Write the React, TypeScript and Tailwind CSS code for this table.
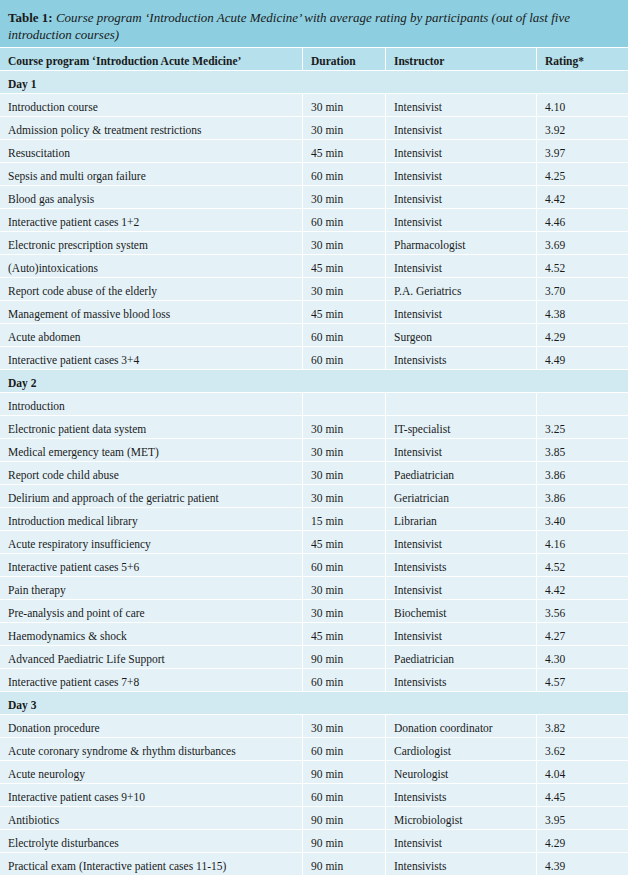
type Row = [string, string, string, string];

interface Day {
  label: string;
  rows: Row[];
}

const days: Day[] = [
  {
    label: 'Day 1',
    rows: [
      ['Introduction course', '30 min', 'Intensivist', '4.10'],
      ['Admission policy & treatment restrictions', '30 min', 'Intensivist', '3.92'],
      ['Resuscitation', '45 min', 'Intensivist', '3.97'],
      ['Sepsis and multi organ failure', '60 min', 'Intensivist', '4.25'],
      ['Blood gas analysis', '30 min', 'Intensivist', '4.42'],
      ['Interactive patient cases 1+2', '60 min', 'Intensivist', '4.46'],
      ['Electronic prescription system', '30 min', 'Pharmacologist', '3.69'],
      ['(Auto)intoxications', '45 min', 'Intensivist', '4.52'],
      ['Report code abuse of the elderly', '30 min', 'P.A. Geriatrics', '3.70'],
      ['Management of massive blood loss', '45 min', 'Intensivist', '4.38'],
      ['Acute abdomen', '60 min', 'Surgeon', '4.29'],
      ['Interactive patient cases 3+4', '60 min', 'Intensivists', '4.49'],
    ],
  },
  {
    label: 'Day 2',
    rows: [
      ['Introduction', '', '', ''],
      ['Electronic patient data system', '30 min', 'IT-specialist', '3.25'],
      ['Medical emergency team (MET)', '30 min', 'Intensivist', '3.85'],
      ['Report code child abuse', '30 min', 'Paediatrician', '3.86'],
      ['Delirium and approach of the geriatric patient', '30 min', 'Geriatrician', '3.86'],
      ['Introduction medical library', '15 min', 'Librarian', '3.40'],
      ['Acute respiratory insufficiency', '45 min', 'Intensivist', '4.16'],
      ['Interactive patient cases 5+6', '60 min', 'Intensivists', '4.52'],
      ['Pain therapy', '30 min', 'Intensivist', '4.42'],
      ['Pre-analysis and point of care', '30 min', 'Biochemist', '3.56'],
      ['Haemodynamics & shock', '45 min', 'Intensivist', '4.27'],
      ['Advanced Paediatric Life Support', '90 min', 'Paediatrician', '4.30'],
      ['Interactive patient cases 7+8', '60 min', 'Intensivists', '4.57'],
    ],
  },
  {
    label: 'Day 3',
    rows: [
      ['Donation procedure', '30 min', 'Donation coordinator', '3.82'],
      ['Acute coronary syndrome & rhythm disturbances', '60 min', 'Cardiologist', '3.62'],
      ['Acute neurology', '90 min', 'Neurologist', '4.04'],
      ['Interactive patient cases 9+10', '60 min', 'Intensivists', '4.45'],
      ['Antibiotics', '90 min', 'Microbiologist', '3.95'],
      ['Electrolyte disturbances', '90 min', 'Intensivist', '4.29'],
      ['Practical exam (Interactive patient cases 11-15)', '90 min', 'Intensivists', '4.39'],
    ],
  },
];

const gridCols = 'grid grid-cols-[302px_82px_150px_1fr] gap-x-px';
const cell = 'flex h-[22px] items-center px-2 pt-[5px]';

export default function App(): JSX.Element {
  return (
    <div className="w-[628px] min-h-[879px] bg-white font-['Liberation_Serif',serif] text-[11.5px] text-[#1a1a1a]">
      <div className="flex flex-col gap-px">
        <div className="h-[47px] bg-[#8dcfe1] px-2 pt-[9px] text-[13px] leading-[17px]">
          <span className="font-bold">Table 1:</span>{' '}
          <span className="italic">
            Course program ‘Introduction Acute Medicine’ with average rating by participants (out of last five
            introduction courses)
          </span>
        </div>

        <div className={gridCols}>
          <div className={`${cell} bg-[#b5e0ec] font-bold`}>Course program ‘Introduction Acute Medicine’</div>
          <div className={`${cell} bg-[#b5e0ec] font-bold`}>Duration</div>
          <div className={`${cell} bg-[#b5e0ec] font-bold`}>Instructor</div>
          <div className={`${cell} bg-[#b5e0ec] font-bold`}>Rating*</div>
        </div>

        {days.map((day) => (
          <div key={day.label} className="flex flex-col gap-px">
            <div className={`${cell} bg-[#d1eaf2] font-bold`}>{day.label}</div>
            {day.rows.map((row) => (
              <div key={row[0]} className={gridCols}>
                {row.map((text, i) => (
                  <div key={i} className={`${cell} bg-[#e4f2f8]`}>
                    {text}
                  </div>
                ))}
              </div>
            ))}
          </div>
        ))}
      </div>
    </div>
  );
}
